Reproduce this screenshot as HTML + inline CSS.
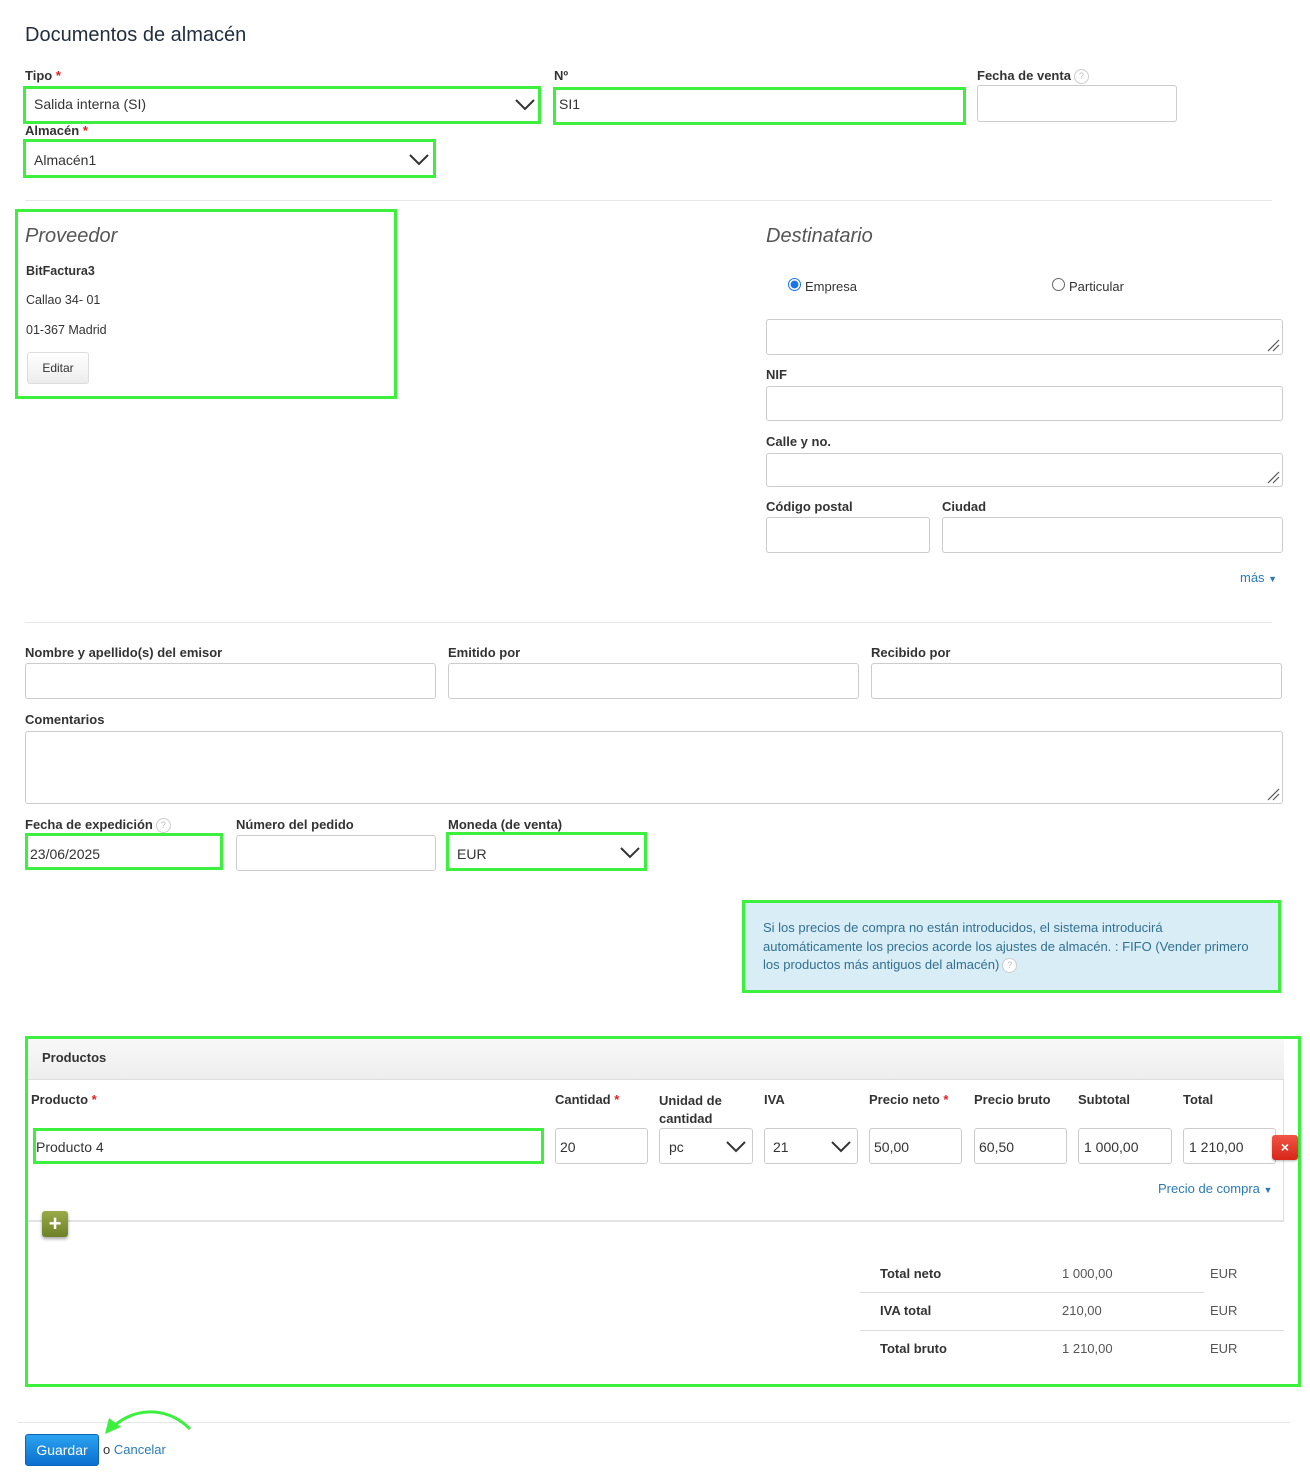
<!DOCTYPE html>
<html><head><meta charset="utf-8"><style>
*{box-sizing:border-box;margin:0;padding:0}
body{width:1310px;height:1476px;background:#fff;position:relative;font-family:"Liberation Sans",Arial,sans-serif;color:#333;overflow:hidden}
.a{position:absolute}
.t{position:absolute;font-size:13px;line-height:16px;white-space:nowrap}
.b{font-weight:bold;color:#333}
.r{color:#e02020;font-weight:bold}
.i{position:absolute;border:1px solid #ccc;border-radius:3px;background:#fff}
.g{position:absolute;border:3px solid #3ef03e}
.v{position:absolute;font-size:14px;line-height:16px;color:#333;white-space:nowrap}
.hr{position:absolute;height:1px;background:#e6e6e6}
.q{display:inline-block;width:15px;height:15px;border:1px solid #ccc;border-radius:50%;font-size:9px;line-height:13px;text-align:center;color:#bbb;vertical-align:middle;font-weight:normal;margin-left:3px}
.rs{position:absolute;right:2px;bottom:2px;width:14px;height:14px}
</style></head><body>
<svg width="0" height="0" style="position:absolute"><defs>
<symbol id="chev" viewBox="0 0 20 12"><path d="M1 1 L10 10 L19 1" fill="none" stroke="#333" stroke-width="2"/></symbol>
<symbol id="rz" viewBox="0 0 14 14"><path d="M13 2 L2 13 M13 7 L7 13" stroke="#555" stroke-width="1.2"/></symbol>
</defs></svg>

<div class="t" style="left:25px;top:23px;font-size:20px;line-height:24px;color:#1f2d3d">Documentos de almacén</div>

<div class="t b" style="left:25px;top:68px">Tipo <span class="r">*</span></div>
<div class="g" style="left:23px;top:86px;width:518px;height:38px"></div>
<div class="v" style="left:34px;top:96px">Salida interna (SI)</div>
<svg class="a" style="left:515px;top:99px" width="20" height="12"><use href="#chev"/></svg>

<div class="t b" style="left:554px;top:68px">Nº</div>
<div class="g" style="left:553px;top:87px;width:413px;height:38px"></div>
<div class="v" style="left:559px;top:96px">SI1</div>

<div class="t b" style="left:977px;top:68px">Fecha de venta<span class="q">?</span></div>
<div class="i" style="left:977px;top:85px;width:200px;height:37px"></div>

<div class="t b" style="left:25px;top:123px">Almacén <span class="r">*</span></div>
<div class="g" style="left:23px;top:139px;width:413px;height:39px"></div>
<div class="v" style="left:34px;top:152px">Almacén1</div>
<svg class="a" style="left:409px;top:154px" width="20" height="12"><use href="#chev"/></svg>

<div class="hr" style="left:25px;top:200px;width:1247px"></div>

<div class="g" style="left:15px;top:209px;width:382px;height:190px"></div>
<div class="t" style="left:25px;top:224px;font-size:20px;line-height:24px;font-style:italic;color:#555">Proveedor</div>
<div class="t b" style="left:26px;top:263px;font-size:12.5px">BitFactura3</div>
<div class="t" style="left:26px;top:292px;font-size:12.5px">Callao 34- 01</div>
<div class="t" style="left:26px;top:322px;font-size:12.5px">01-367 Madrid</div>
<div class="a" style="left:27px;top:352px;width:62px;height:32px;border:1px solid #ddd;border-radius:3px;background:linear-gradient(#fff,#ececec);font-size:12px;line-height:30px;text-align:center">Editar</div>

<div class="t" style="left:766px;top:224px;font-size:20px;line-height:24px;font-style:italic;color:#555">Destinatario</div>
<div class="a" style="left:788px;top:278px;width:13px;height:13px;border-radius:50%;border:1px solid #1a73e8;background:radial-gradient(#1a73e8 45%,#fff 55%)"></div>
<div class="t" style="left:805px;top:279px">Empresa</div>
<div class="a" style="left:1052px;top:278px;width:13px;height:13px;border-radius:50%;border:1px solid #666"></div>
<div class="t" style="left:1069px;top:279px">Particular</div>
<div class="i" style="left:766px;top:319px;width:517px;height:36px"><svg class="rs"><use href="#rz"/></svg></div>
<div class="t b" style="left:766px;top:367px">NIF</div>
<div class="i" style="left:766px;top:386px;width:517px;height:35px"></div>
<div class="t b" style="left:766px;top:434px">Calle y no.</div>
<div class="i" style="left:766px;top:453px;width:517px;height:34px"><svg class="rs"><use href="#rz"/></svg></div>
<div class="t b" style="left:766px;top:499px">Código postal</div>
<div class="i" style="left:766px;top:517px;width:164px;height:36px"></div>
<div class="t b" style="left:942px;top:499px">Ciudad</div>
<div class="i" style="left:942px;top:517px;width:341px;height:36px"></div>
<div class="t" style="left:1240px;top:570px;color:#2a7ab7">más <span style="font-size:9px">▼</span></div>

<div class="hr" style="left:25px;top:622px;width:1247px"></div>

<div class="t b" style="left:25px;top:645px">Nombre y apellido(s) del emisor</div>
<div class="t b" style="left:448px;top:645px">Emitido por</div>
<div class="t b" style="left:871px;top:645px">Recibido por</div>
<div class="i" style="left:25px;top:663px;width:411px;height:36px"></div>
<div class="i" style="left:448px;top:663px;width:411px;height:36px"></div>
<div class="i" style="left:871px;top:663px;width:411px;height:36px"></div>
<div class="t b" style="left:25px;top:712px">Comentarios</div>
<div class="i" style="left:25px;top:731px;width:1258px;height:73px"><svg class="rs"><use href="#rz"/></svg></div>

<div class="t b" style="left:25px;top:817px">Fecha de expedición<span class="q">?</span></div>
<div class="g" style="left:25px;top:833px;width:198px;height:37px"></div>
<div class="v" style="left:30px;top:846px">23/06/2025</div>
<div class="t b" style="left:236px;top:817px">Número del pedido</div>
<div class="i" style="left:236px;top:835px;width:200px;height:36px"></div>
<div class="t b" style="left:448px;top:817px">Moneda (de venta)</div>
<div class="g" style="left:446px;top:832px;width:201px;height:39px"></div>
<div class="v" style="left:457px;top:846px">EUR</div>
<svg class="a" style="left:620px;top:847px" width="20" height="12"><use href="#chev"/></svg>

<div class="a" style="left:742px;top:900px;width:539px;height:93px;background:#d9edf7;border:3px solid #3ef03e"></div>
<div class="a" style="left:763px;top:919px;white-space:nowrap;font-size:13px;line-height:18.5px;color:#31708f">Si los precios de compra no están introducidos, el sistema introducirá<br>automáticamente los precios acorde los ajustes de almacén. : FIFO (Vender primero<br>los productos más antiguos del almacén)<span class="q" style="background:#fff">?</span></div>

<div class="g" style="left:25px;top:1036px;width:1276px;height:351px"></div>
<div class="a" style="left:28px;top:1039px;width:1256px;height:183px;border-right:1px solid #ddd;border-bottom:2px solid #e3e3e3"></div>
<div class="a" style="left:28px;top:1039px;width:1256px;height:41px;background:linear-gradient(#f8f8f8,#eee);border-bottom:1px solid #ddd"></div>
<div class="t b" style="left:42px;top:1050px">Productos</div>

<div class="t b" style="left:31px;top:1092px">Producto <span class="r">*</span></div>
<div class="t b" style="left:555px;top:1092px">Cantidad <span class="r">*</span></div>
<div class="t b" style="left:659px;top:1092px;line-height:18px">Unidad de<br>cantidad</div>
<div class="t b" style="left:764px;top:1092px">IVA</div>
<div class="t b" style="left:869px;top:1092px">Precio neto <span class="r">*</span></div>
<div class="t b" style="left:974px;top:1092px">Precio bruto</div>
<div class="t b" style="left:1078px;top:1092px">Subtotal</div>
<div class="t b" style="left:1183px;top:1092px">Total</div>

<div class="g" style="left:33px;top:1128px;width:511px;height:36px"></div>
<div class="v" style="left:36px;top:1139px">Producto 4</div>
<div class="i" style="left:555px;top:1128px;width:93px;height:36px"></div><div class="v" style="left:560px;top:1139px">20</div>
<div class="i" style="left:659px;top:1128px;width:94px;height:36px"></div><div class="v" style="left:669px;top:1139px">pc</div>
<svg class="a" style="left:726px;top:1141px" width="20" height="12"><use href="#chev"/></svg>
<div class="i" style="left:764px;top:1128px;width:94px;height:36px"></div><div class="v" style="left:773px;top:1139px">21</div>
<svg class="a" style="left:831px;top:1141px" width="20" height="12"><use href="#chev"/></svg>
<div class="i" style="left:869px;top:1128px;width:93px;height:36px"></div><div class="v" style="left:874px;top:1139px">50,00</div>
<div class="i" style="left:974px;top:1128px;width:93px;height:36px"></div><div class="v" style="left:979px;top:1139px">60,50</div>
<div class="i" style="left:1078px;top:1128px;width:94px;height:36px"></div><div class="v" style="left:1084px;top:1139px">1 000,00</div>
<div class="i" style="left:1183px;top:1128px;width:93px;height:36px"></div><div class="v" style="left:1189px;top:1139px">1 210,00</div>
<div class="a" style="left:1272px;top:1135px;width:26px;height:25px;border-radius:3px;background:linear-gradient(#f05545,#d8261a);color:#fff;font-weight:bold;font-size:14px;line-height:25px;text-align:center;box-shadow:0 1px 2px rgba(0,0,0,.3)">×</div>
<div class="t" style="left:1158px;top:1181px;color:#2a7ab7">Precio de compra <span style="font-size:9px">▼</span></div>

<div class="a" style="left:42px;top:1211px;width:26px;height:26px;border-radius:3px;background:linear-gradient(#98aa48,#6f8128);color:#fff;font-weight:bold;font-size:22px;line-height:25px;text-align:center;box-shadow:0 2px 3px rgba(0,0,0,.35)">+</div>

<div class="t b" style="left:880px;top:1266px">Total neto</div>
<div class="t" style="left:1062px;top:1266px;color:#555">1 000,00</div>
<div class="t" style="left:1210px;top:1266px;color:#555">EUR</div>
<div class="hr" style="left:860px;top:1292px;width:344px;background:#ddd"></div>
<div class="t b" style="left:880px;top:1303px">IVA total</div>
<div class="t" style="left:1062px;top:1303px;color:#555">210,00</div>
<div class="t" style="left:1210px;top:1303px;color:#555">EUR</div>
<div class="hr" style="left:860px;top:1330px;width:424px;background:#ddd"></div>
<div class="t b" style="left:880px;top:1341px">Total bruto</div>
<div class="t" style="left:1062px;top:1341px;color:#555">1 210,00</div>
<div class="t" style="left:1210px;top:1341px;color:#555">EUR</div>

<div class="hr" style="left:18px;top:1422px;width:1272px"></div>
<div class="a" style="left:25px;top:1434px;width:74px;height:32px;border-radius:3px;background:linear-gradient(#2ba3f0,#0b6fcf);border:1px solid #0a64b8;color:#fff;font-size:14px;line-height:31px;text-align:center">Guardar</div>
<div class="t" style="left:103px;top:1442px">o <span style="color:#2a7ab7">Cancelar</span></div>
<svg class="a" style="left:95px;top:1405px" width="105" height="35"><path d="M95 24 C75 4 45 0 20 20" fill="none" stroke="#3ef03e" stroke-width="3"/><path d="M10 29 L14 13 L26 22 Z" fill="#3ef03e"/></svg>
</body></html>
